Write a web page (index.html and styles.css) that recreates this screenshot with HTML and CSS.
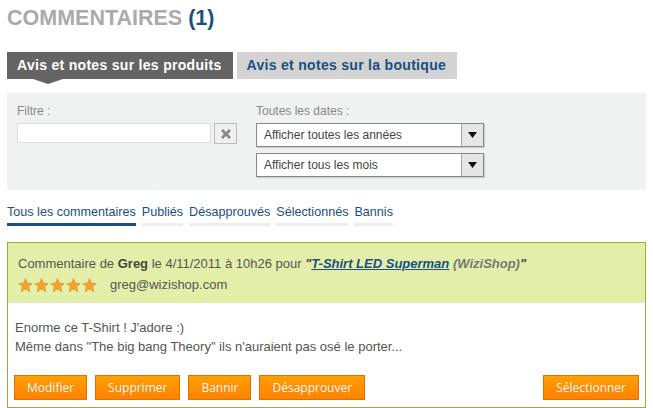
FILE: index.html
```html
<!DOCTYPE html>
<html lang="fr">
<head>
  <meta charset="UTF-8">
  <title>Commentaires</title>
  <link rel="stylesheet" href="styles.css">
</head>
<body>
  <div class="page">
    <h1 class="title">COMMENTAIRES <span class="count">(1)</span></h1>

    <!-- Onglets -->
    <div class="tabs">
      <div class="tab active">Avis et notes sur les produits</div>
      <div class="tab">Avis et notes sur la boutique</div>
    </div>

    <!-- Filtres -->
    <div class="filters">
      <div class="filter-col">
        <label>Filtre :</label>
        <div class="filter-row">
          <input type="text" class="filter-input">
          <span class="clear-btn">
            <svg width="14" height="14" viewBox="0 0 14 14"><path d="M2 4L4 2L7 5L10 2L12 4L9 7L12 10L10 12L7 9L4 12L2 10L5 7Z" fill="#888"/></svg>
          </span>
        </div>
      </div>
      <div class="dates-col">
        <label>Toutes les dates :</label>
        <div class="select">
          <span class="select-text">Afficher toutes les années</span>
          <span class="select-arrow"><svg width="9" height="6" viewBox="0 0 9 6"><path d="M0 0H9L4.5 6Z" fill="#111"/></svg></span>
        </div>
        <div class="select">
          <span class="select-text">Afficher tous les mois</span>
          <span class="select-arrow"><svg width="9" height="6" viewBox="0 0 9 6"><path d="M0 0H9L4.5 6Z" fill="#111"/></svg></span>
        </div>
      </div>
    </div>

    <!-- Sous-onglets -->
    <div class="subtabs">
      <a class="subtab active">Tous les commentaires</a>
      <a class="subtab">Publiés</a>
      <a class="subtab">Désapprouvés</a>
      <a class="subtab">Sélectionnés</a>
      <a class="subtab">Bannis</a>
    </div>

    <!-- Commentaire -->
    <div class="comment">
      <div class="comment-head">
        <p class="meta">Commentaire de <b>Greg</b> le 4/11/2011 à 10h26 pour <span class="product">"<a>T-Shirt LED Superman</a> <span class="shop">(WiziShop)</span>"</span></p>
        <div class="author">
          <span class="stars">
            <svg width="15" height="14" viewBox="0 0 24 23"><path d="M12 1L15 8.5L23 9L17 14.5L19 22.5L12 18L5 22.5L7 14.5L1 9L9 8.5Z" fill="#f7a030" stroke="#d98a20" stroke-width="1"/></svg>
            <svg width="15" height="14" viewBox="0 0 24 23"><path d="M12 1L15 8.5L23 9L17 14.5L19 22.5L12 18L5 22.5L7 14.5L1 9L9 8.5Z" fill="#f7a030" stroke="#d98a20" stroke-width="1"/></svg>
            <svg width="15" height="14" viewBox="0 0 24 23"><path d="M12 1L15 8.5L23 9L17 14.5L19 22.5L12 18L5 22.5L7 14.5L1 9L9 8.5Z" fill="#f7a030" stroke="#d98a20" stroke-width="1"/></svg>
            <svg width="15" height="14" viewBox="0 0 24 23"><path d="M12 1L15 8.5L23 9L17 14.5L19 22.5L12 18L5 22.5L7 14.5L1 9L9 8.5Z" fill="#f7a030" stroke="#d98a20" stroke-width="1"/></svg>
            <svg width="15" height="14" viewBox="0 0 24 23"><path d="M12 1L15 8.5L23 9L17 14.5L19 22.5L12 18L5 22.5L7 14.5L1 9L9 8.5Z" fill="#f7a030" stroke="#d98a20" stroke-width="1"/></svg>
          </span>
          <span class="email">greg@wizishop.com</span>
        </div>
      </div>
      <div class="comment-body">
        <p>Enorme ce T-Shirt ! J'adore :)</p>
        <p>Même dans "The big bang Theory" ils n'auraient pas osé le porter...</p>
      </div>
      <div class="actions">
        <button class="btn">Modifier</button>
        <button class="btn">Supprimer</button>
        <button class="btn">Bannir</button>
        <button class="btn">Désapprouver</button>
        <button class="btn right">Sélectionner</button>
      </div>
    </div>
  </div>
</body>
</html>
```

FILE: styles.css
```css
/* Global */
body {
  margin: 0;
  font-family: "Liberation Sans", Arial, sans-serif;
  font-size: 13px;
  color: #555;
  background: #fff;
}

.page {
  padding: 0 7px;
}

.title {
  margin: 0;
  padding-top: 5px;
  font-size: 21.5px;
  line-height: 26px;
  color: #aaaaaa;
}

.count {
  color: #1a4f80;
}

/* Tabs */
.tabs {
  display: flex;
  gap: 4px;
  margin-top: 21px;
}

.tab {
  position: relative;
  height: 27px;
  line-height: 27px;
  padding: 0 11px 0 10px;
  font-size: 14px;
  font-weight: bold;
  letter-spacing: 0.3px;
  color: #1a4f80;
  background: #d3d3d3;
}

.tab.active {
  color: #fff;
  background: #646464;
}

.tab.active::after {
  content: "";
  position: absolute;
  left: 26px;
  top: 27px;
  border-left: 15px solid transparent;
  border-right: 15px solid transparent;
  border-top: 5px solid #646464;
}

/* Filters */
.filters {
  display: flex;
  margin-top: 14px;
  height: 97px;
  padding: 11px 10px 0;
  box-sizing: border-box;
  background: #f0f1f1;
}

.filters label {
  display: block;
  color: #888;
  font-size: 12px;
  line-height: 14px;
  margin-bottom: 5px;
}

.filter-col {
  width: 239px;
}

.filter-row {
  display: flex;
  gap: 3px;
}

.filter-input {
  width: 194px;
  height: 20px;
  box-sizing: border-box;
  margin: 0;
  border: 1px solid #ddd;
  background: #fff;
}

.clear-btn {
  display: flex;
  align-items: center;
  justify-content: center;
  width: 23px;
  height: 21px;
  box-sizing: border-box;
  border: 1px solid #bbb;
  background: #f0f0f0;
}

.select {
  display: flex;
  width: 228px;
  height: 24px;
  box-sizing: border-box;
  margin-bottom: 6px;
  border: 1px solid #888;
  background: #fff;
  box-shadow: 1px 1px 1px rgba(0, 0, 0, 0.15);
}

.select-text {
  flex: 1;
  padding-left: 7px;
  line-height: 22px;
  font-size: 12px;
  color: #444;
}

.select-arrow {
  display: flex;
  align-items: center;
  justify-content: center;
  width: 21px;
  border-left: 1px solid #aaa;
  background: #e6e6e6;
}

/* Sub tabs */
.subtabs {
  display: flex;
  gap: 6px;
  margin-top: 14px;
}

.subtab {
  padding-bottom: 3px;
  font-size: 12.6px;
  line-height: 16px;
  color: #1a4f80;
  border-bottom: 3px solid #eee;
}

.subtab.active {
  border-bottom-color: #1a4f80;
}

/* Comment card */
.comment {
  margin-top: 16px;
  border: 1px solid #9aae3c;
}

.comment-head {
  height: 60px;
  padding: 13px 10px 0;
  box-sizing: border-box;
  background: #e3efa9;
}

.meta {
  margin: 0;
  line-height: 16px;
}

.meta b {
  color: #444;
}

.product {
  font-weight: bold;
  font-style: italic;
  color: #444;
}

.product a {
  color: #1a4f80;
  text-decoration: underline;
}

.shop {
  color: #777;
}

.author {
  display: flex;
  align-items: center;
  gap: 13px;
  margin-top: 5px;
}

.stars {
  display: flex;
  gap: 1px;
}

.comment-body {
  padding: 15px 7px 0;
}

.comment-body p {
  margin: 0;
  line-height: 19px;
}

.actions {
  display: flex;
  gap: 8px;
  padding: 19px 6px 7px;
}

.btn {
  height: 25px;
  padding: 0 12px;
  font-family: "Open Sans", sans-serif;
  font-size: 12px;
  color: #fff;
  border: 1px solid #e07000;
  background: linear-gradient(#ffa000, #ff8200);
  text-shadow: 0 0 1px rgba(0, 0, 0, 0.2);
  cursor: pointer;
}

.btn.right {
  margin-left: auto;
}
```
